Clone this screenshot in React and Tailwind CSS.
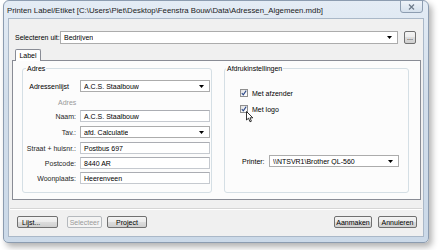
import React from 'react';

const font = { fontFamily: '"Liberation Sans", Arial, sans-serif' };

function Combo({ value, className = '' }) {
  return (
    <div className={`flex items-center justify-between h-[12px] bg-white border border-[#acacac] pl-[3px] pr-[5px] ${className}`}>
      <span className="leading-none truncate">{value}</span>
      <svg width="5" height="3" viewBox="0 0 5 3">
        <path d="M0 0h5L2.5 3z" fill="#000" />
      </svg>
    </div>
  );
}

function Field({ value, className = '' }) {
  return (
    <div className={`flex items-center h-[12px] bg-white border border-[#c5c9cf] border-t-[#abadb3] pl-[3px] ${className}`}>
      <span className="leading-none">{value}</span>
    </div>
  );
}

function Btn({ children, className = '', disabled }) {
  return (
    <div
      className={`flex items-center justify-center h-[12px] rounded-[2px] border leading-none ${
        disabled
          ? 'border-[#b5b9bd] bg-[#f4f4f4] text-[#9a9a9a]'
          : 'border-[#707070] bg-[linear-gradient(#f3f3f3,#ebebeb_50%,#dddddd_50%,#cfcfcf)] text-black'
      } ${className}`}
    >
      {children}
    </div>
  );
}

function Check({ label }) {
  return (
    <div className="flex items-center h-[8px]">
      <div className="w-[8px] h-[8px] border border-[#8f8f8f] bg-[linear-gradient(135deg,#e1e1e1,#ffffff)] flex items-center justify-center">
        <svg width="6" height="6" viewBox="0 0 6 6">
          <path d="M0.8 3.2 L2.3 4.8 L5.2 0.6" stroke="#2d4a8a" strokeWidth="1.1" fill="none" />
        </svg>
      </div>
      <span className="ml-[4px] leading-none">{label}</span>
    </div>
  );
}

function Row({ label, children, top }) {
  return (
    <div className={`flex items-center ${top}`}>
      <span className="w-[53px] text-right leading-none text-[#1e1e1e]">{label}</span>
      <div className="ml-[4px]">{children}</div>
    </div>
  );
}

export default function App() {
  return (
    <div className="w-[439px] h-[250px] bg-white overflow-hidden pl-[3px] text-[7px] text-black" style={font}>
      {/* Window frame */}
      <div className="relative w-[426px] h-[243px] rounded-b-[5px] rounded-t-[6px] border border-[#8c9cb0] bg-[linear-gradient(#e4ecf5,#d2deeb_40%,#cbd9e8)] shadow-[3px_4px_6px_rgba(0,0,0,0.3)] flex flex-col">
        {/* Title bar */}
        <div className="flex items-start justify-between h-[17px]">
          <span className="text-[7.8px] leading-none mt-[6px] ml-[3px] text-[#1a1a1a] whitespace-nowrap">
            Printen Label/Etiket [C:\Users\Piet\Desktop\Feenstra Bouw\Data\Adressen_Algemeen.mdb]
          </span>
          <div className="w-[23px] h-[13px] -mt-[1px] mr-[5px] rounded-b-[3px] border border-[#8d9db1] bg-[linear-gradient(#eef3f9,#d5e0ec)] flex items-center justify-center">
            <svg width="7" height="6" viewBox="0 0 7 6">
              <path d="M1 0.5 L6 5.5 M6 0.5 L1 5.5" stroke="#6d7a8a" strokeWidth="1.2" />
            </svg>
          </div>
        </div>

        {/* Client area */}
        <div className="ml-[4px] w-[416px] h-[219px] border border-[#aab8c8] bg-[#f0f0f0] flex flex-col">
          <div className="flex items-center h-[13px] mt-[12px] pl-[6px]">
            <span className="w-[45px] leading-none">Selecteren uit:</span>
            <Combo value="Bedrijven" className="w-[338px] h-[13px]" />
            <Btn className="ml-[6px] w-[12px] h-[13px] items-end pb-[2px]">...</Btn>
          </div>

          {/* Tab */}
          <div className="flex mt-[5px] pl-[6px]">
            <div className="relative z-10 w-[26px] h-[12px] -mb-[1px] bg-white border border-b-0 border-[#898c95] rounded-t-[2px] flex items-center justify-center leading-none">
              Label
            </div>
          </div>

          {/* Tab panel */}
          <div className="ml-[3px] w-[409px] h-[140px] border border-[#898c95] bg-[#fcfcfc] flex pt-[4px] pl-[9px]">
            <fieldset className="w-[190px] h-[128px] border border-[#d5dfe5] rounded-[3px] flex flex-col">
              <legend className="ml-[3px] px-[1px] leading-none">Adres</legend>
              <div className="flex items-center mt-[8px]">
                <span className="w-[46px] text-right leading-none">Adressenlijst</span>
                <Combo value="A.C.S. Staalbouw" className="ml-[11px] w-[130px]" />
              </div>
              <span className="mt-[7px] ml-[35px] leading-none text-[#9a9a9a]">Adres</span>
              <Row label="Naam:" top="mt-[4px]"><Field value="A.C.S. Staalbouw" className="w-[130px]" /></Row>
              <Row label="Tav.:" top="mt-[4px]"><Combo value="afd. Calculatie" className="w-[130px]" /></Row>
              <Row label="Straat + huisnr.:" top="mt-[4px]"><Field value="Postbus 697" className="w-[130px]" /></Row>
              <Row label="Postcode:" top="mt-[3px]"><Field value="8440 AR" className="w-[130px]" /></Row>
              <Row label="Woonplaats:" top="mt-[3px]"><Field value="Heerenveen" className="w-[130px]" /></Row>
            </fieldset>

            <fieldset className="relative ml-[12px] w-[185px] h-[128px] border border-[#d5dfe5] rounded-[3px] flex flex-col">
              <legend className="ml-[1px] px-[1px] leading-none">Afdrukinstellingen</legend>
              <div className="ml-[15px] mt-[17px]"><Check label="Met afzender" /></div>
              <div className="ml-[15px] mt-[8px]"><Check label="Met logo" /></div>
              {/* mouse cursor */}
              <svg className="absolute left-[21px] top-[39px]" width="8" height="12" viewBox="0 0 8 12">
                <path d="M0.5 0.5 L0.5 9 L2.5 7.2 L4 10.8 L5.4 10.2 L4 6.8 L6.8 6.8 Z" fill="#fff" stroke="#000" strokeWidth="0.8" />
              </svg>
              <div className="flex items-center mt-[42px] ml-[17px]">
                <span className="w-[27px] leading-none">Printer:</span>
                <Combo value="\\NTSVR1\Brother QL-560" className="w-[130px]" />
              </div>
            </fieldset>
          </div>

          <div className="mt-[8px] mx-[1px] h-[2px] border-t border-[#d5d5d5] border-b border-b-white" />

          {/* Buttons */}
          <div className="flex items-center mt-[6px] pl-[8px] pr-[6px]">
            <Btn className="w-[41px] justify-start pl-[4px]">Lijst...</Btn>
            <Btn disabled className="ml-[9px] w-[35px]">Selecteer</Btn>
            <Btn className="ml-[5px] w-[40px]">Project</Btn>
            <div className="flex-1" />
            <Btn className="w-[38px]">Aanmaken</Btn>
            <Btn className="ml-[6px] w-[39px]">Annuleren</Btn>
          </div>
        </div>
      </div>
    </div>
  );
}
